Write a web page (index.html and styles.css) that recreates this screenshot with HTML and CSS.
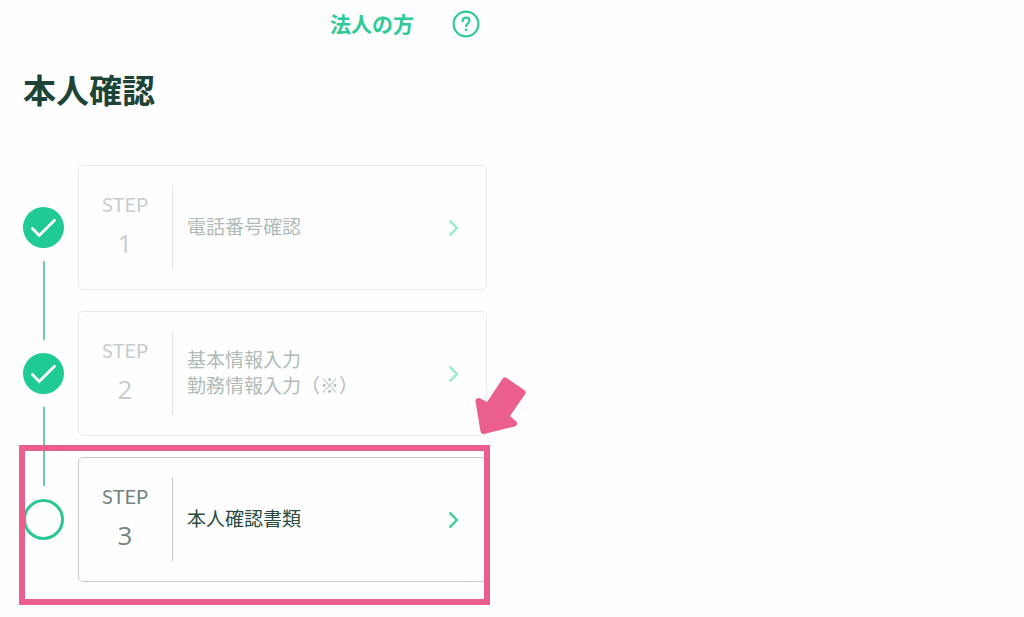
FILE: index.html
```html
<!DOCTYPE html>
<html lang="ja">
<head>
<meta charset="utf-8">
<meta name="viewport" content="width=device-width, initial-scale=1">
<title>本人確認</title>
<link rel="stylesheet" href="styles.css">
</head>
<body>
<div class="page">
  <header class="topbar">
    <a class="corporate" href="#">法人の方</a>
    <button class="help" type="button" aria-label="ヘルプ">
      <svg width="28" height="28" viewBox="0 0 28 28" fill="none" stroke="currentColor" stroke-width="2.2" stroke-linecap="round">
        <circle cx="14" cy="14" r="12.4"/>
        <path d="M10.6 11.2c0-2.2 1.5-3.5 3.5-3.5s3.4 1.3 3.4 3.1c0 2.6-3.3 2.7-3.3 5.4"/>
        <circle cx="14.1" cy="19.8" r="1.4" fill="currentColor" stroke="none"/>
      </svg>
    </button>
  </header>
  <main>
    <h1 class="title">本人確認</h1>
    <div class="progress">
      <div class="rail" aria-hidden="true">
        <span class="marker done"><svg width="41" height="41" viewBox="0 0 41 41"><path d="M9.500 21.500l6.700 7L31.500 13.200" fill="none" stroke="#fff" stroke-width="2.8" stroke-linecap="round"/></svg></span>
        <span class="line"></span>
        <span class="marker done"><svg width="41" height="41" viewBox="0 0 41 41"><path d="M9.500 21.500l6.700 7L31.500 13.200" fill="none" stroke="#fff" stroke-width="2.8" stroke-linecap="round"/></svg></span>
        <span class="line"></span>
        <span class="marker"></span>
      </div>
      <ol class="steps">
        <li>
          <a class="card finished" href="#">
            <span class="step"><span class="step-word">STEP</span><span class="step-number">1</span></span>
            <span class="label">電話番号確認</span>
            <svg class="chevron" width="12" height="18" viewBox="0 0 12 18"><path d="M1.500 1.500L9 9l-7.500 7.500"/></svg>
          </a>
        </li>
        <li>
          <a class="card finished" href="#">
            <span class="step"><span class="step-word">STEP</span><span class="step-number">2</span></span>
            <span class="label">基本情報入力<br>勤務情報入力（※）</span>
            <svg class="chevron" width="12" height="18" viewBox="0 0 12 18"><path d="M1.500 1.500L9 9l-7.500 7.500"/></svg>
          </a>
        </li>
        <li>
          <a class="card" href="#">
            <span class="step"><span class="step-word">STEP</span><span class="step-number">3</span></span>
            <span class="label">本人確認書類</span>
            <svg class="chevron" width="12" height="18" viewBox="0 0 12 18"><path d="M1.500 1.500L9 9l-7.500 7.500"/></svg>
          </a>
        </li>
      </ol>
      <div class="highlight" aria-hidden="true"></div>
      <svg class="arrow" width="56" height="62" viewBox="0 0 56 62" aria-hidden="true"><path d="M33 5.500L50.500 17.500L34 41.500L42 48.500L11.500 56L6.500 26L16 31Z" fill="#eb5f8e" stroke="#eb5f8e" stroke-width="6" stroke-linejoin="round"/></svg>
    </div>
  </main>
</div>
</body>
</html>
```
FILE: styles.css
```css
* {
  box-sizing: border-box;
}

body {
  margin: 0;
  background: #fefefe;
  color: #1d4437;
  font-family: "Noto Sans CJK JP", sans-serif;
}

.page {
  max-width: 512px;
  padding: 0 25px 35px 23px;
}

.topbar {
  display: flex;
  align-items: center;
  justify-content: flex-end;
  gap: 38px;
  height: 48px;
  padding-right: 7px;
}

.corporate {
  padding-bottom: 2px;
  color: #2fca98;
  font-size: 21px;
  font-weight: 700;
  text-decoration: none;
}

.help {
  display: flex;
  padding: 0;
  border: 0;
  background: none;
  color: #2fca98;
}

.title {
  margin: 17px 0 52px;
  font-size: 33px;
  font-weight: 700;
  line-height: 48px;
}

.progress {
  position: relative;
  display: grid;
  grid-template-columns: 41px 1fr;
  gap: 14px;
}

.rail {
  display: flex;
  flex-direction: column;
  align-items: center;
  justify-content: center;
  gap: 13px;
}

.marker {
  width: 41px;
  height: 41px;
  border: 3px solid #2bc796;
  border-radius: 50%;
}

.done {
  border: 0;
  background: #20ca94;
}

.done svg {
  display: block;
}

.line {
  width: 2px;
  height: 79px;
  background: #6cc9aa;
}

.steps {
  display: grid;
  gap: 21px;
  margin: 0;
  padding: 0;
  list-style: none;
}

.card {
  display: grid;
  grid-template-columns: 94px 1fr 12px;
  align-items: center;
  min-height: 125px;
  padding-right: 26px;
  border: 1px solid #c8cbca;
  border-radius: 5px;
  color: #284c40;
  text-decoration: none;
}

.step {
  display: flex;
  flex-direction: column;
  align-items: center;
  gap: 6px;
  padding: 3px 1px 8px 0;
  border-right: 1px solid #c5c9c7;
  color: #74847e;
}

.step-word {
  font-family: Lato, sans-serif;
  font-size: 20px;
  line-height: 30px;
}

.step-number {
  font-family: "Open Sans", sans-serif;
  font-size: 26px;
  font-weight: 500;
  line-height: 36px;
}

.label {
  padding: 0 0 4px 14px;
  font-size: 19px;
  font-weight: 400;
  line-height: 26px;
}

.chevron {
  fill: none;
  stroke: #4ccfa5;
  stroke-width: 2.5;
}

.finished {
  border-color: #e9ebea;
  color: #b0bcb7;
}

.finished .step {
  border-color: #e3e5e4;
  color: #c9cecc;
}

.finished .chevron {
  stroke: #a3e8d1;
}

.highlight {
  position: absolute;
  right: -3px;
  bottom: -23px;
  left: -4px;
  height: 160px;
  border: 6px solid #eb5f8e;
  pointer-events: none;
}

.arrow {
  position: absolute;
  right: -41px;
  bottom: 145px;
}
```
